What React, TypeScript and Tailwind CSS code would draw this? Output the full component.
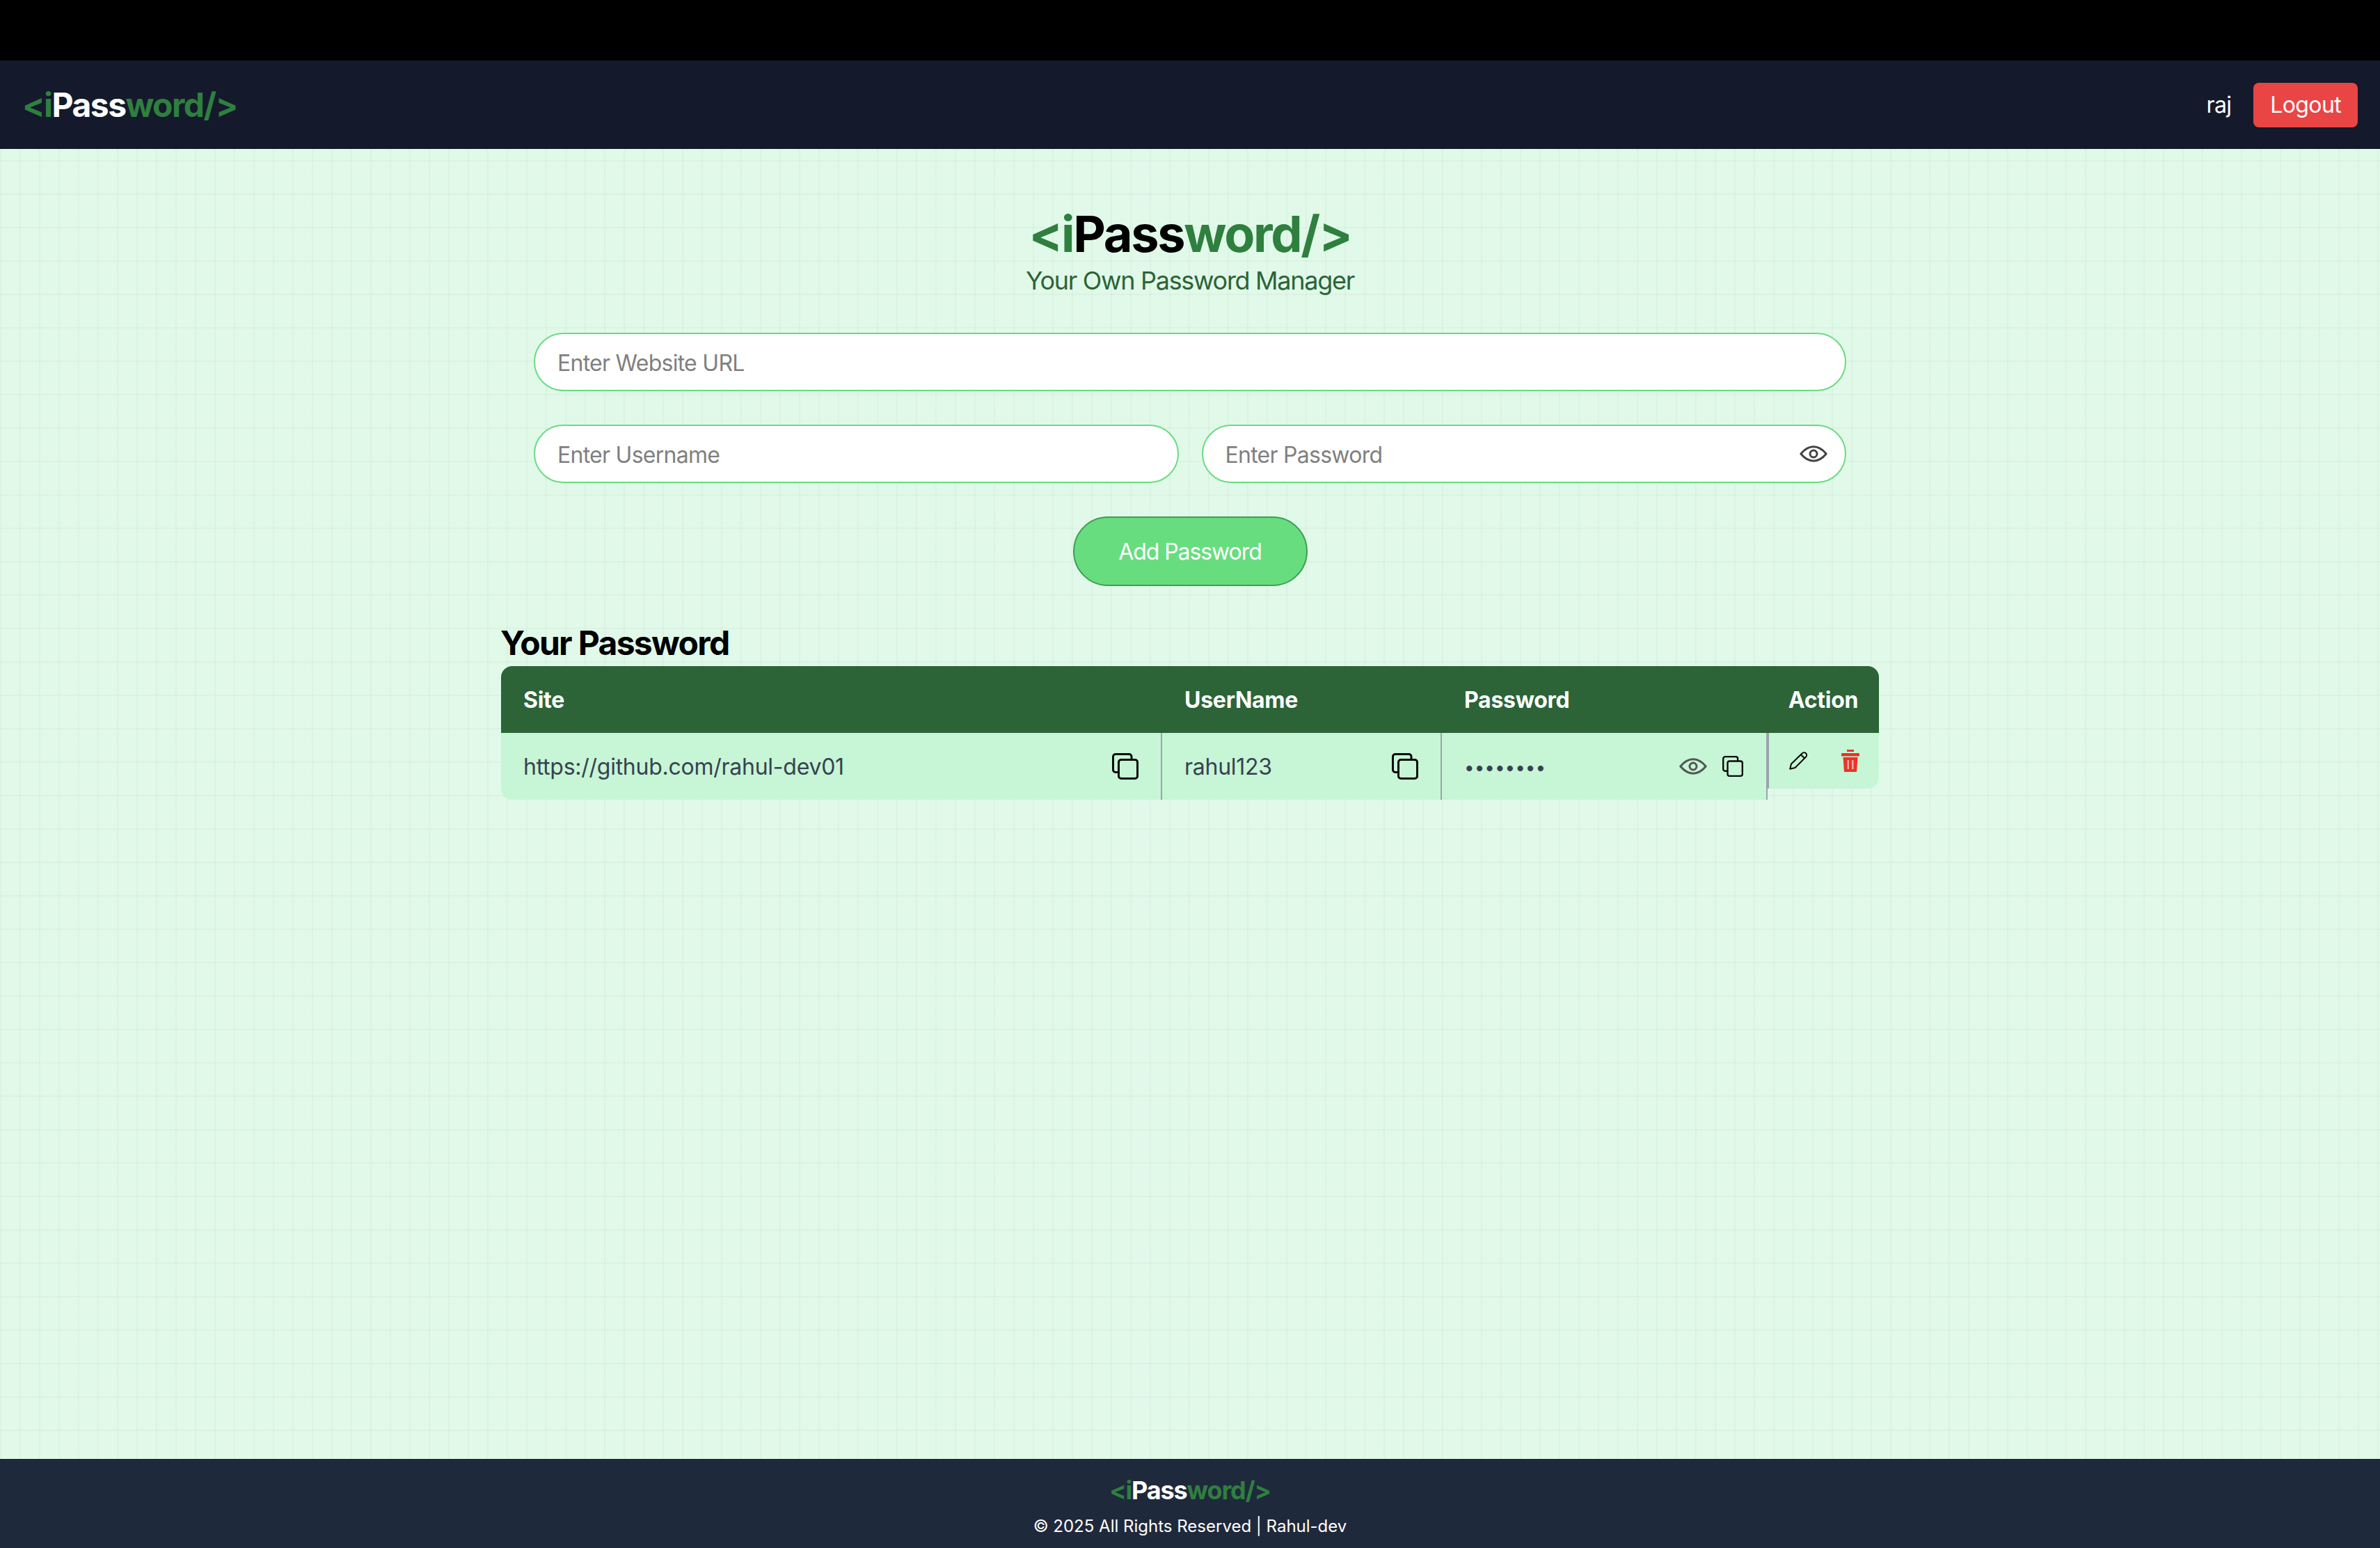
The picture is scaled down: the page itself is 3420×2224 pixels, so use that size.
import React from "react";

const CopyIcon = ({ className }: { className: string }) => (
  <svg className={className} viewBox="0 0 38 38" fill="none" stroke="#0a0a0a" strokeWidth="3" strokeLinecap="round" strokeLinejoin="round">
    <path d="M28 7.5V5a3.5 3.5 0 0 0-3.5-3.5H5A3.5 3.5 0 0 0 1.500 5v19A3.500 3.500 0 0 0 5 27.500h3" />
    <rect x="9.500" y="9.500" width="27" height="27" rx="3.500" />
  </svg>
);

const EyeIcon = ({ color }: { color: string }) => (
  <svg className="w-[40px] h-[24px] shrink-0" viewBox="0 0 40 24" fill="none" stroke={color} strokeWidth="3" strokeLinejoin="round">
    <path d="M1.800 12C8 4.500 14 1.800 20 1.800S32 4.500 38.200 12C32 19.500 26 22.200 20 22.200S8 19.500 1.800 12Z" />
    <circle cx="20" cy="12" r="5" />
  </svg>
);

const PencilIcon = () => (
  <svg className="w-[26px] h-[26px] shrink-0" viewBox="0 0 26 26" fill="none" stroke="#0a0a0a" strokeWidth="2" strokeLinejoin="round">
    <path d="M1.200 24.800 3 17.500 18.500 2.500c1.500-1.500 4-1.700 5.500-.3 1.500 1.400 1.300 3.800 0 5.300L8.500 23Z" />
    <path d="m16.800 4.300 5.400 5.200" />
  </svg>
);

const TrashIcon = () => (
  <svg className="w-[26px] h-[32px] shrink-0" viewBox="0 0 26 32">
    <rect x="8" y="0" width="10" height="3" fill="#e8342a" />
    <rect x="0" y="5" width="26" height="4.500" rx="1" fill="#e8342a" />
    <path d="M2.500 11h21L22 32H4Z" fill="#e8342a" />
    <rect x="8.500" y="15" width="2.500" height="13" fill="#f4a79f" />
    <rect x="15" y="15" width="2.500" height="13" fill="#f4a79f" />
  </svg>
);

const Logo = ({ size, pass }: { size: string; pass: string }) => (
  <div className={`font-bold tracking-[-0.032em] ${size}`}>
    <span className="text-[#2f7f3f]">&lt;i</span>
    <span className={pass}>Pass</span>
    <span className="text-[#2f7f3f]">word/&gt;</span>
  </div>
);

const inputClass =
  "w-full h-[84px] rounded-full border-2 border-[#68dd80] bg-white px-8 pt-[2px] text-[32px] tracking-[-0.023em] text-[#374151] placeholder:text-[#7f7f7f] outline-none";

export default function App() {
  return (
    <div className="min-h-[2224px] flex flex-col bg-black font-[Inter,sans-serif]">
      <div className="h-[87px] shrink-0" />
      <nav className="h-[127px] shrink-0 bg-[#141a2b] flex items-center justify-between px-8">
        <Logo size="text-[48px] leading-[64px]" pass="text-white" />
        <div className="flex items-center gap-8 text-white text-[32px] leading-[48px] tracking-[-0.02em]">
          <span>raj</span>
          <button className="bg-[#e94545] rounded-lg px-6 py-2 text-white">Logout</button>
        </div>
      </nav>

      <main className="flex-1 bg-[#e1f9e9] bg-[linear-gradient(to_right,#4f4f4f09_2px,transparent_2px),linear-gradient(to_bottom,#4f4f4f09_2px,transparent_2px)] bg-[size:28px_48px] bg-[position:0_16px] pt-[82px]">
        <div className="text-center">
          <Logo size="text-[72px] leading-[80px]" pass="text-black" />
          <p className="text-[36px] leading-[54px] tracking-[-0.036em] text-[#2c6437]">Your Own Password Manager</p>
        </div>

        <div className="w-[1886px] mx-auto mt-[48px] flex flex-col gap-[48px]">
          <input className={inputClass} placeholder="Enter Website URL" />
          <div className="grid grid-cols-2 gap-[33px]">
            <input className={inputClass} placeholder="Enter Username" />
            <div className="relative">
              <input className={inputClass} placeholder="Enter Password" />
              <span className="absolute right-[27px] top-[30px]">
                <EyeIcon color="#444444" />
              </span>
            </div>
          </div>
          <button className="self-center w-[337px] h-[100px] pt-[2px] rounded-full border-2 border-[#3f9e52] bg-[#68dd80] text-white text-[32px] tracking-[-0.034em]">
            Add Password
          </button>
        </div>

        <div className="w-[1980px] mx-auto mt-[48px]">
          <h2 className="text-[48px] leading-[67px] font-bold tracking-[-0.035em] -ml-[1px] text-black">Your Password</h2>
          <div className="rounded-2xl overflow-hidden">
            <div className="grid grid-cols-[950px_402px_468px_160px] h-[96px] pt-[2px] bg-[#2c6437] text-white text-[32px] font-bold tracking-[-0.008em] items-center">
              <div className="px-8">Site</div>
              <div className="px-8">UserName</div>
              <div className="px-8">Password</div>
              <div className="text-center">Action</div>
            </div>
            <div className="grid grid-cols-[950px_402px_468px_160px] h-[96px] text-[32px] tracking-[-0.008em] text-[#374151]">
              <div className="bg-[#c6f6d5] border-r-2 border-[#9ca3af] px-8 flex items-center justify-between">
                <span className="pt-[2px]">https://github.com/rahul-dev01</span>
                <CopyIcon className="w-[38px] h-[38px] shrink-0" />
              </div>
              <div className="bg-[#c6f6d5] border-r-2 border-[#9ca3af] px-8 flex items-center justify-between">
                <span className="pt-[2px]">rahul123</span>
                <CopyIcon className="w-[38px] h-[38px] shrink-0" />
              </div>
              <div className="bg-[#c6f6d5] border-r-2 border-[#9ca3af] pl-8 pr-[33px] flex items-center justify-between">
                <span className="text-[26px] tracking-normal pt-[2px]">••••••••</span>
                <div className="flex items-center gap-[22px]">
                  <EyeIcon color="#555555" />
                  <CopyIcon className="w-[30px] h-[30px] shrink-0" />
                </div>
              </div>
              <div className="h-[80px] bg-[#c6f6d5] border-l-2 border-[#9ca3af] rounded-br-2xl flex items-center pl-[29px] gap-[49px]">
                <PencilIcon />
                <TrashIcon />
              </div>
            </div>
          </div>
        </div>
      </main>

      <footer className="h-[128px] shrink-0 bg-[#1f293c] flex flex-col items-center text-white pt-[19px]">
        <Logo size="text-[36px] leading-[52px]" pass="text-white" />
        <p className="text-[24px] leading-[36px] mt-[8px]">© 2025 All Rights Reserved | Rahul-dev</p>
      </footer>
    </div>
  );
}
